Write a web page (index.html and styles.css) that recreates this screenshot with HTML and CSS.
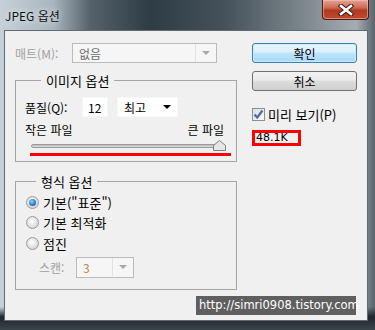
FILE: index.html
```html
<!DOCTYPE html>
<html lang="ko">
<head>
    <meta charset="UTF-8">
    <title>JPEG 옵션</title>
    <link rel="stylesheet" href="styles.css">
</head>
<body>

<div class="window">
    <div class="titlebar">
        <span class="title">JPEG 옵션</span>
        <div class="close">
            <svg width="18" height="12" viewBox="0 0 18 12">
                <path d="M4 2 L14 10 M14 2 L4 10" stroke="#3a1a14" stroke-width="4.5" stroke-linecap="square"/>
                <path d="M4 2 L14 10 M14 2 L4 10" stroke="#ffffff" stroke-width="2.6" stroke-linecap="square"/>
            </svg>
        </div>
    </div>

    <div class="client">
        <div class="left">
            <div class="row matte">
                <span class="label disabled">매트(M):</span>
                <div class="combo combo-disabled matte-combo">
                    <span class="value">없음</span>
                    <span class="sep"></span>
                    <span class="arrow gray"></span>
                </div>
            </div>

            <fieldset class="group image-group">
                <legend>이미지 옵션</legend>
                <div class="row quality">
                    <span class="label">품질(Q):</span>
                    <div class="field num">12</div>
                    <div class="field select">최고<span class="arrow black"></span></div>
                </div>
                <div class="size-labels">
                    <span>작은 파일</span>
                    <span>큰 파일</span>
                </div>
                <div class="slider">
                    <div class="track"></div>
                    <svg class="thumb" width="13" height="11" viewBox="0 0 13 11">
                        <path d="M0.5 10.5 V5.5 L6.5 0.5 L12.5 5.5 V10.5 Z" fill="#e6e6e6" stroke="#7f7f7f"/>
                    </svg>
                </div>
                <div class="redline"></div>
            </fieldset>

            <fieldset class="group format-group">
                <legend>형식 옵션</legend>
                <label class="radio-row"><span class="radio checked"></span>기본("표준")</label>
                <label class="radio-row"><span class="radio"></span>기본 최적화</label>
                <label class="radio-row"><span class="radio"></span>점진</label>
                <div class="row scan">
                    <span class="label disabled">스캔:</span>
                    <div class="combo combo-disabled scan-combo">
                        <span class="value orange">3</span>
                        <span class="sep"></span>
                        <span class="arrow gray"></span>
                    </div>
                </div>
            </fieldset>
        </div>

        <div class="right">
            <button class="btn btn-default">확인</button>
            <button class="btn">취소</button>
            <label class="check-row">
                <span class="checkbox">
                    <svg width="11" height="11" viewBox="0 0 11 11">
                        <path d="M1.5 5.5 L4.2 8.5 L9.5 1.5" fill="none" stroke="#4b6aa8" stroke-width="2.2"/>
                    </svg>
                </span>
                미리 보기(P)
            </label>
            <div class="filesize">48.1K</div>
        </div>

        <div class="watermark">http://simri0908.tistory.com</div>
    </div>
</div>

</body>
</html>
```

FILE: styles.css
```css
body {
    margin: 0;
    padding: 0;
    width: 375px;
    height: 330px;
    overflow: hidden;
    font-family: "Noto Sans CJK KR", "DejaVu Sans", sans-serif;
    font-size: 12px;
    color: #000;
}
.window {
    width: 375px;
    height: 330px;
    box-sizing: border-box;
    padding: 0 7px 9px 4px;
    display: flex;
    flex-direction: column;
    background:
        linear-gradient(180deg, rgba(0, 0, 0, 0) 93%, #1f262c 96%, #3a444b 100%),
        linear-gradient(90deg, #c6d0d8 0%, #aab6bf 14%, #55626c 24%, #2e3c46 40%, #45525b 60%, #7a848b 80%, #a6adb2 95%, #58636b 100%);
}
.titlebar {
    height: 30px;
    display: flex;
    justify-content: space-between;
    align-items: flex-start;
    flex-shrink: 0;
}
.title {
    font-family: "Noto Sans CJK KR", sans-serif;
    font-size: 12px;
    color: #101010;
    padding: 7px 0 0 1px;
    text-shadow: 0 0 6px rgba(255, 255, 255, 0.9);
}
.close {
    width: 45px;
    height: 19px;
    margin-right: -1px;
    display: flex;
    align-items: center;
    justify-content: center;
    border: 1px solid #4c1a12;
    border-top: none;
    border-radius: 0 0 4px 4px;
    background: linear-gradient(180deg, #e2a596 0%, #cf6a53 40%, #b03a22 55%, #c14a2c 100%);
    box-shadow: inset 0 0 0 1px rgba(255, 200, 190, 0.5);
}
.client {
    flex: 1;
    position: relative;
    display: flex;
    background: #f0f0f0;
    border: 1px solid #5f6b74;
    padding: 12px 0 0 10px;
}
.left {
    width: 222px;
}
.row {
    display: flex;
    align-items: center;
}
.label.disabled {
    color: #a0a0a0;
}
.matte .label {
    width: 57px;
}
.combo {
    display: flex;
    align-items: center;
    height: 20px;
    box-sizing: border-box;
    border: 1px solid #b8bcbf;
    background: #f6f6f6;
}
.combo .value {
    flex: 1;
    padding-left: 6px;
    color: #6d6d6d;
}
.combo .value.orange {
    color: #c2873a;
}
.combo .sep {
    width: 1px;
    height: 18px;
    background: #e2e2e2;
}
.matte-combo {
    width: 145px;
}
.arrow {
    display: inline-block;
    width: 0;
    height: 0;
    border-left: 4px solid transparent;
    border-right: 4px solid transparent;
}
.arrow.gray {
    border-top: 4px solid #a8a8a8;
    margin: 0 6px;
}
.arrow.black {
    border-top: 4px solid #000;
    margin-left: auto;
}
.group {
    margin: 0;
    border: 1px solid #a5a5a5;
    padding: 0 0 0 9px;
}
.group legend {
    font-size: 13px;
    padding: 0 5px;
    margin-left: 16px;
    line-height: 17px;
}
.image-group {
    margin-top: 9px;
    padding-right: 3px;
    padding-bottom: 5px;
}
.quality {
    margin-top: 8px;
}
.quality .label {
    width: 57px;
}
.field {
    height: 20px;
    box-sizing: border-box;
    background: #fff;
    border: 1px solid #f7f7f7;
    display: flex;
    align-items: center;
    padding: 0 6px;
}
.num {
    width: 26px;
    padding-left: 5px;
}
.select {
    width: 61px;
    margin-left: 9px;
}
.size-labels {
    display: flex;
    justify-content: space-between;
    margin-top: 5px;
    padding-right: 9px;
    line-height: 16px;
}
.slider {
    display: flex;
    align-items: center;
    margin: 2px 0 0 6px;
    width: 195px;
    height: 11px;
}
.track {
    flex: 1;
    height: 4px;
    box-sizing: border-box;
    border: 1px solid #9a9a9a;
    border-radius: 2px;
    background: linear-gradient(180deg, #b8b8b8, #e4e4e4);
    margin-right: -6px;
}
.thumb {
    flex-shrink: 0;
}
.redline {
    height: 3px;
    background: #ff0000;
    margin: 2px 0 0 5px;
    width: 201px;
}
.format-group {
    margin-top: 11px;
    padding-top: 2px;
    padding-bottom: 11px;
}
.format-group legend {
    margin-left: 11px;
}
.radio-row {
    display: flex;
    align-items: center;
    height: 20.5px;
    font-size: 13px;
    margin-left: 1px;
}
.radio {
    width: 11px;
    height: 11px;
    border-radius: 50%;
    border: 1px solid #9c9c9c;
    background: radial-gradient(circle at 45% 40%, #ffffff, #d8d8d8 70%, #c4c4c4);
    margin-right: 4px;
    position: relative;
}
.radio.checked::after {
    content: "";
    position: absolute;
    left: 2px;
    top: 2px;
    width: 7px;
    height: 7px;
    border-radius: 50%;
    background: radial-gradient(circle at 40% 35%, #8fd4ff, #1c7cc8 60%, #0d4f8a);
}
.scan {
    margin-top: 3px;
    margin-left: 14px;
}
.scan .label {
    width: 37px;
}
.scan-combo {
    width: 58px;
    height: 21px;
}
.right {
    margin-left: 15px;
    width: 105px;
    display: flex;
    flex-direction: column;
    align-items: flex-start;
}
.btn {
    width: 105px;
    height: 20px;
    font-family: "Noto Sans CJK KR", sans-serif;
    font-size: 12px;
    padding: 0;
    border-radius: 3px;
    border: 1px solid #707070;
    background: linear-gradient(180deg, #f2f2f2 0%, #ebebeb 45%, #dddddd 50%, #cfcfcf 100%);
    margin-bottom: 8px;
}
.btn-default {
    border-color: #3c7fb1;
    background: linear-gradient(180deg, #eaf6fd 0%, #d9f0fc 45%, #bee6fd 50%, #a7d9f5 100%);
    box-shadow: inset 0 0 0 1px #c8ecfb;
}
.check-row {
    display: flex;
    align-items: center;
    margin-top: 6px;
    font-size: 13px;
}
.checkbox {
    width: 11px;
    height: 11px;
    border: 1px solid #8e8f8f;
    background: linear-gradient(135deg, #dcdcdc, #fbfbfb);
    margin-right: 3px;
    display: flex;
    align-items: center;
    justify-content: center;
}
.filesize {
    margin-top: 6px;
    width: 42px;
    height: 10px;
    border: 3px solid #ff0000;
    line-height: 10px;
    font-family: "DejaVu Sans", sans-serif;
    font-size: 11px;
    padding-left: 1px;
}
.watermark {
    position: absolute;
    left: 191px;
    top: 265px;
    width: 160px;
    height: 19px;
    background: #5f5f5f;
    color: #ffffff;
    font-family: "DejaVu Sans", sans-serif;
    font-size: 11.5px;
    line-height: 19px;
    padding-left: 3px;
    box-sizing: border-box;
    white-space: nowrap;
}
```
